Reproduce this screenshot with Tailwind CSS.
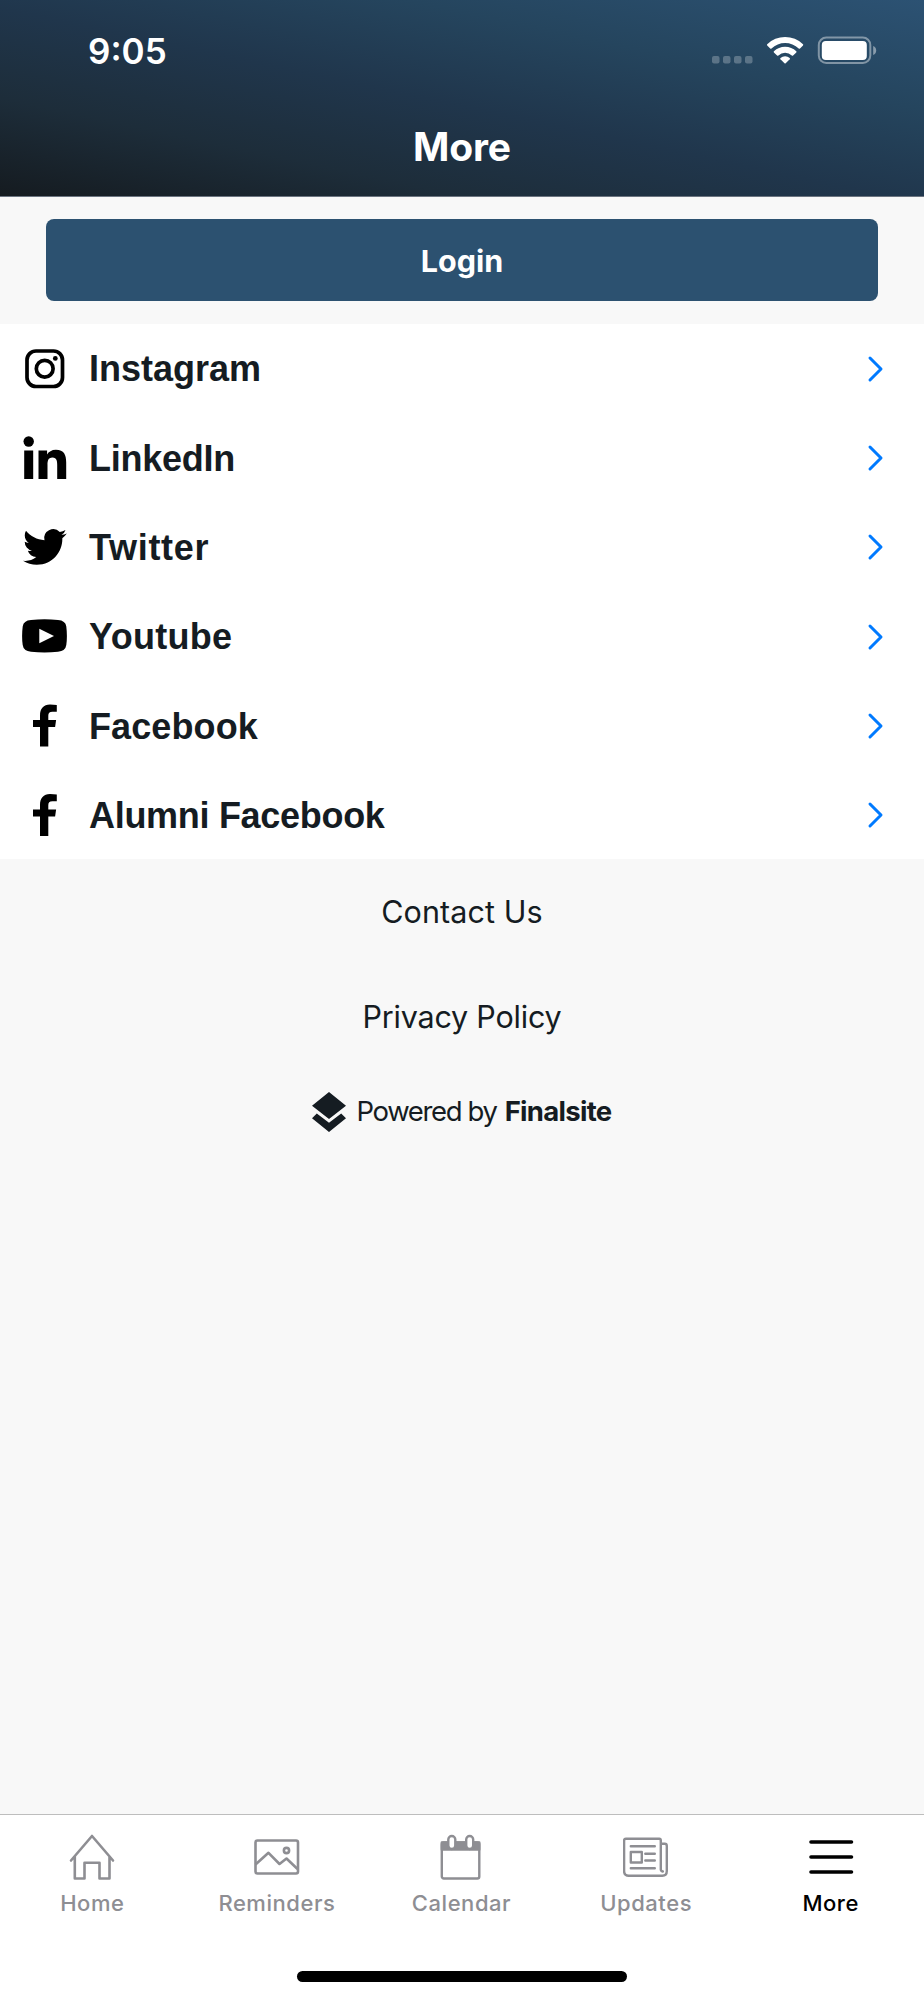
<!DOCTYPE html>
<html lang="en">
<head>
<meta charset="utf-8">
<title>More</title>
<script src="https://cdn.jsdelivr.net/npm/@tailwindcss/browser@4"></script>
</head>
<body class="bg-[#f8f8f8]">
<div class="flex h-[2000px] w-[924px] flex-col overflow-hidden bg-[#f8f8f8] font-['Inter',sans-serif] text-[#151c22]">
  <header class="flex h-[197px] shrink-0 flex-col border-b border-[#6b7480] bg-[linear-gradient(to_top_right,#151b20_0%,#1d2d3a_25%,#20364c_48%,#25455e_72%,#2c5273_100%)] text-white">
    <div class="flex h-[100px] items-center justify-between pl-[88px] pr-[47px] pt-[2px]">
      <span class="text-[35px] font-semibold leading-[40px]">9:05</span>
      <svg class="mt-[8px] h-[70px] w-[165px]" viewBox="712 20 165 70" fill="#fff">
        <g fill-opacity=".25"><rect x="712" y="56" width="7.5" height="7.5" rx="2"/><rect x="723" y="56" width="7.5" height="7.5" rx="2"/><rect x="734" y="56" width="7.5" height="7.5" rx="2"/><rect x="745" y="56" width="7.5" height="7.5" rx="2"/></g>
        <path d="M767.2 44.3a25.5 25.5 0 0 1 35.8 0q.5.6 0 1.2l-3 3q-.7.6-1.3 0a19.5 19.5 0 0 0-27.2 0q-.6.6-1.3 0l-3-3q-.5-.6 0-1.2Z"/>
        <path d="M773.9 51.2a16 16 0 0 1 22.4 0q.5.6 0 1.2l-3.200 3q-.6.6-1.300 0a9.800 9.800 0 0 0-13.400 0q-.7.6-1.300 0l-3.200-3q-.5-.6 0-1.200Z"/>
        <path d="M780.500 58a6.800 6.800 0 0 1 9.200 0q.6.6 0 1.300l-4 4q-.6.500-1.200 0l-4-4q-.6-.7 0-1.300Z"/>
        <rect x="818.800" y="37.500" width="51.500" height="25.500" rx="7.500" fill="none" stroke="#fff" stroke-opacity=".42" stroke-width="2"/>
        <rect x="821.800" y="41" width="45" height="19" rx="4"/>
        <path d="M873.200 46v9q3-1.300 3-4.500t-3-4.500Z" fill-opacity=".45"/>
      </svg>
    </div>
    <h1 class="flex h-[94px] items-center justify-center text-[39px] font-bold tracking-[-0.1px]"><span class="leading-[48px]">More</span></h1>
  </header>

  <div class="flex h-[127px] shrink-0 items-center px-[46px] pb-px">
    <button class="flex h-[82px] w-full items-center justify-center rounded-[8px] bg-[#2c5170] pt-[1px] text-[30.500px] font-bold leading-[40px] text-white">Login</button>
  </div>

  <ul class="flex h-[535px] shrink-0 flex-col bg-white font-['Liberation_Sans',Arial,sans-serif] text-[36px] font-bold">
    <li class="flex h-[89.330px] shrink-0 items-center pl-[22px] pr-[40px]">
      <svg class="h-[45px] w-[45px]" viewBox="0 0 45 45" fill="none" stroke="#000" stroke-width="3.700"><rect x="5" y="5" width="35.500" height="35.500" rx="9"/><circle cx="22.700" cy="22.700" r="8.400"/><circle cx="33.300" cy="12.400" r="2.400" fill="#000" stroke="none"/></svg>
      <span class="ml-[22px] grow pt-[1.500px] leading-[40px]">Instagram</span>
      <svg class="h-[28px] w-[17px]" viewBox="0 0 17 28" fill="none" stroke="#007aff" stroke-width="3" stroke-linecap="round" stroke-linejoin="round"><path d="M3 3 14 14 3 25"/></svg>
    </li>
    <li class="flex h-[89.330px] shrink-0 items-center pl-[22px] pr-[40px]">
      <svg class="h-[45px] w-[45px]" viewBox="0 0 45 45"><circle cx="6.700" cy="6.500" r="5.200"/><path d="M2.200 15.500h9v28.500h-9ZM16.500 15.500h8.600v4c1.500-2.600 4.600-4.700 8.800-4.700 8.300 0 10.300 5.200 10.300 12.700V44h-9V30c0-3.600-.3-7.600-4.700-7.600-4.500 0-5 3.700-5 7.300V44h-9Z"/></svg>
      <span class="ml-[22px] grow pt-[1.500px] leading-[40px] tracking-[-0.25px]">LinkedIn</span>
      <svg class="h-[28px] w-[17px]" viewBox="0 0 17 28" fill="none" stroke="#007aff" stroke-width="3" stroke-linecap="round" stroke-linejoin="round"><path d="M3 3 14 14 3 25"/></svg>
    </li>
    <li class="flex h-[89.330px] shrink-0 items-center pl-[22px] pr-[40px]">
      <svg class="h-[45px] w-[45px]" viewBox="0 0 45 45"><g transform="translate(1 .1) scale(1.825)"><path d="M23.950 4.570a10 10 0 0 1-2.820.770 4.960 4.960 0 0 0 2.160-2.720c-.950.550-2 .950-3.130 1.180a4.920 4.920 0 0 0-8.390 4.480C7.690 8.100 4.070 6.130 1.640 3.160a4.820 4.820 0 0 0-.670 2.480c0 1.710.870 3.210 2.190 4.100a4.900 4.900 0 0 1-2.230-.620v.060a4.920 4.920 0 0 0 3.950 4.830 5 5 0 0 1-2.210.080 4.940 4.940 0 0 0 4.600 3.420A9.870 9.870 0 0 1 0 19.540a13.990 13.990 0 0 0 7.550 2.210c9.050 0 14-7.500 14-13.980 0-.210 0-.420-.020-.630a9.940 9.940 0 0 0 2.460-2.550Z"/></g></svg>
      <span class="ml-[22px] grow pt-[1.500px] leading-[40px] tracking-[0.7px]">Twitter</span>
      <svg class="h-[28px] w-[17px]" viewBox="0 0 17 28" fill="none" stroke="#007aff" stroke-width="3" stroke-linecap="round" stroke-linejoin="round"><path d="M3 3 14 14 3 25"/></svg>
    </li>
    <li class="flex h-[89.330px] shrink-0 items-center pl-[22px] pr-[40px]">
      <svg class="h-[45px] w-[45px]" viewBox="0 0 45 45"><path fill-rule="evenodd" d="M9 6Q22.500 4.500 36 6 43.500 6.500 44.300 12.500 45.500 22 44.300 31 43.500 37 36 37.800 22.500 39.200 9 37.800 1.500 37 .7 31-.5 22 .7 12.500 1.500 6.500 9 6ZM17.300 14.800V29.200L32 21.900Z"/></svg>
      <span class="ml-[22px] grow pt-[1px] leading-[40px] tracking-[0.300px]">Youtube</span>
      <svg class="h-[28px] w-[17px]" viewBox="0 0 17 28" fill="none" stroke="#007aff" stroke-width="3" stroke-linecap="round" stroke-linejoin="round"><path d="M3 3 14 14 3 25"/></svg>
    </li>
    <li class="flex h-[89.330px] shrink-0 items-center pl-[22px] pr-[40px]">
      <svg class="h-[45px] w-[45px]" viewBox="0 0 45 45"><path d="M18 43.500V24H11V17h7V12.500C18 5.500 21.500 1.500 28 1.500q4 0 6.800.4V8.800H30.500c-3.200 0-4.200 1.500-4.200 4V17h7.800l-1 7h-6.800V43.500Z"/></svg>
      <span class="ml-[22px] grow pt-[1.500px] leading-[40px] tracking-[0.100px]">Facebook</span>
      <svg class="h-[28px] w-[17px]" viewBox="0 0 17 28" fill="none" stroke="#007aff" stroke-width="3" stroke-linecap="round" stroke-linejoin="round"><path d="M3 3 14 14 3 25"/></svg>
    </li>
    <li class="flex h-[89.330px] shrink-0 items-center pl-[22px] pr-[40px]">
      <svg class="h-[45px] w-[45px]" viewBox="0 0 45 45"><path d="M18 43V23.500H11V16.500h7V12C18 5 21.500 1 28 1q4 0 6.800.4V8.300H30.500c-3.200 0-4.200 1.500-4.200 4V16.500h7.800l-1 7h-6.800V43Z"/></svg>
      <span class="ml-[22px] grow pt-[1.500px] leading-[40px] tracking-[-0.300px]">Alumni Facebook</span>
      <svg class="h-[28px] w-[17px]" viewBox="0 0 17 28" fill="none" stroke="#007aff" stroke-width="3" stroke-linecap="round" stroke-linejoin="round"><path d="M3 3 14 14 3 25"/></svg>
    </li>
  </ul>

  <div class="flex grow flex-col items-center text-[30.5px]">
    <a class="mt-[33px] leading-[40px] tracking-[0.100px]">Contact Us</a>
    <a class="mt-[65px] leading-[40px] tracking-[-0.200px]">Privacy Policy</a>
    <div class="mt-[54px] flex h-[42px] items-center">
      <svg class="h-[40px] w-[34px]" viewBox="0 0 34 40" fill="#151c22"><path d="M17 0 34 13.700 17 27 0 13.700ZM4.800 21.500 17 30.700 29.200 21.500 34 26.300 17 40 0 26.300Z"/></svg>
      <span class="-mt-[2px] ml-[10px] text-[27.500px] leading-[40px] tracking-[-1.350px]">Powered by</span>
      <span class="-mt-[2px] ml-[8px] text-[27.500px] font-bold leading-[40px] tracking-[-0.700px]">Finalsite</span>
    </div>
  </div>

  <nav class="flex h-[186px] shrink-0 flex-col items-center border-t border-[#bdbdbd] bg-white">
    <div class="grid w-[923px] grid-cols-5 self-start pt-[19px] text-[22px] font-[450] leading-[30px] tracking-[0.55px] text-[#8e8e93]">
      <a class="flex flex-col items-center">
        <svg class="h-[46px] w-[46px]" viewBox="0 0 46 46" fill="none" stroke="#8e8e93" stroke-width="2.600" stroke-linecap="round" stroke-linejoin="round"><path d="M2 26.500 23 2 44 26.500M5.800 22.500V44.500H15.500V28.700H30.500V44.500H40.500V22.500"/></svg>
        <span class="mt-[8px]">Home</span>
      </a>
      <a class="flex flex-col items-center">
        <svg class="h-[46px] w-[46px]" viewBox="0.500 0 46 46" fill="none" stroke="#8e8e93" stroke-width="2.600" stroke-linejoin="round"><rect x="2" y="6.500" width="42.500" height="33" rx="2"/><path d="M2 30.500 15 18.800 26 30 33 24.500 44 35"/><circle cx="33" cy="16.500" r="2.600"/></svg>
        <span class="mt-[8px]">Reminders</span>
      </a>
      <a class="flex flex-col items-center">
        <svg class="h-[46px] w-[46px]" viewBox="0.500 0 46 46" fill="none" stroke="#8e8e93" stroke-width="2.400"><rect x="4.300" y="8.500" width="37.500" height="36" rx="2"/><path d="M4.300 8.500h37.500v7H4.300Z" fill="#8e8e93" stroke-linejoin="round"/><rect x="10.800" y="2" width="7" height="13" rx="3.500" fill="#fff"/><rect x="28.700" y="2" width="7" height="13" rx="3.500" fill="#fff"/></svg>
        <span class="mt-[8px]">Calendar</span>
      </a>
      <a class="flex flex-col items-center">
        <svg class="h-[46px] w-[46px]" viewBox="0.700 0 46 46" fill="none" stroke="#8e8e93" stroke-width="2.400" stroke-linecap="round" stroke-linejoin="round"><path d="M40.500 37.500Q38.500 37 38.500 35.500V6.500Q38.500 4.800 37 4.800H3.500Q1.800 4.800 1.800 6.500V37Q1.800 41.700 6.500 41.700H40Q44.500 41.700 44.500 37V12Q44.500 9.800 42.500 9.800H38.500M8.500 12.200H32.500M23 19.700H32.500M23 26.500H32.500M8.500 34.200H32.500M8.500 18H19.500V28.500H8.500Z"/></svg>
        <span class="mt-[8px]">Updates</span>
      </a>
      <a class="flex flex-col items-center text-black">
        <svg class="h-[46px] w-[46px]" viewBox="0 0 46 46" fill="none" stroke="#000" stroke-width="3.600" stroke-linecap="round"><path d="M3 8H43.500M3 23H43.500M3 38H43.500"/></svg>
        <span class="mt-[8px]">More</span>
      </a>
    </div>
    <div class="mt-[53px] h-[11px] w-[330px] rounded-full bg-black"></div>
  </nav>
</div>
</body>
</html>
